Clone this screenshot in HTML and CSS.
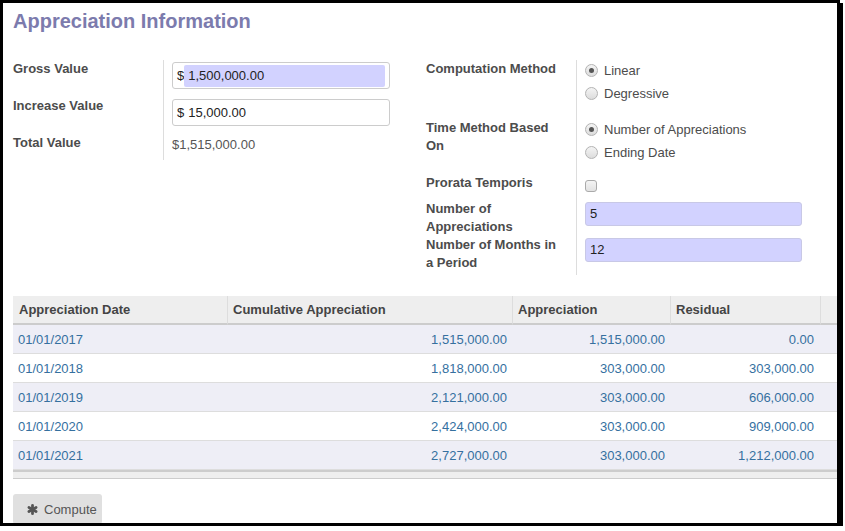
FILE: index.html
```html
<!DOCTYPE html>
<html>
<head>
<meta charset="utf-8">
<link rel="stylesheet" href="styles.css">
</head>
<body>
<div class="frame">
  <h1 class="title">Appreciation Information</h1>
  <div class="groups">
    <div class="grp grp-left">
      <div class="lbl">Gross Value</div>
      <div class="fld"><div class="money"><span class="cur">$</span><span class="amt req">1,500,000.00</span></div></div>
      <div class="lbl">Increase Value</div>
      <div class="fld"><div class="money"><span class="cur">$</span><span class="amt">15,000.00</span></div></div>
      <div class="lbl">Total Value</div>
      <div class="fld"><div class="total">$1,515,000.00</div></div>
    </div>
    <div class="grp grp-right">
      <div class="lbl">Computation Method</div>
      <div class="fld">
        <div class="radio-opt"><span class="radio checked"></span><span>Linear</span></div>
        <div class="radio-opt"><span class="radio"></span><span>Degressive</span></div>
      </div>
      <div class="lbl">Time Method Based On</div>
      <div class="fld">
        <div class="radio-opt"><span class="radio checked"></span><span>Number of Appreciations</span></div>
        <div class="radio-opt"><span class="radio"></span><span>Ending Date</span></div>
      </div>
      <div class="lbl">Prorata Temporis</div>
      <div class="fld"><div class="check"></div></div>
      <div class="lbl">Number of Appreciations</div>
      <div class="fld"><div class="num-input">5</div></div>
      <div class="lbl">Number of Months in a Period</div>
      <div class="fld"><div class="num-input">12</div></div>
    </div>
  </div>
  <table class="lines">
    <colgroup>
      <col class="c-date"><col class="c-cum"><col class="c-app"><col class="c-res"><col class="c-end">
    </colgroup>
    <thead>
      <tr><th>Appreciation Date</th><th>Cumulative Appreciation</th><th>Appreciation</th><th>Residual</th><th></th></tr>
    </thead>
    <tbody>
      <tr><td>01/01/2017</td><td class="num">1,515,000.00</td><td class="num">1,515,000.00</td><td class="num">0.00</td><td></td></tr>
      <tr><td>01/01/2018</td><td class="num">1,818,000.00</td><td class="num">303,000.00</td><td class="num">303,000.00</td><td></td></tr>
      <tr><td>01/01/2019</td><td class="num">2,121,000.00</td><td class="num">303,000.00</td><td class="num">606,000.00</td><td></td></tr>
      <tr><td>01/01/2020</td><td class="num">2,424,000.00</td><td class="num">303,000.00</td><td class="num">909,000.00</td><td></td></tr>
      <tr><td>01/01/2021</td><td class="num">2,727,000.00</td><td class="num">303,000.00</td><td class="num">1,212,000.00</td><td></td></tr>
    </tbody>
    <tfoot>
      <tr><td colspan="5"></td></tr>
    </tfoot>
  </table>
  <div class="actions">
    <button class="btn"><svg class="ico" viewBox="0 0 12 12" width="11" height="11"><g stroke="#555" stroke-width="3" stroke-linecap="round"><line x1="6" y1="1.5" x2="6" y2="10.5"/><line x1="2.1" y1="3.75" x2="9.9" y2="8.25"/><line x1="2.1" y1="8.25" x2="9.9" y2="3.75"/></g></svg><span>Compute</span></button>
  </div>
</div>
</body>
</html>
```

FILE: styles.css
```css
body {
  margin: 0;
  background: #fff;
  font-family: "Liberation Sans", Arial, sans-serif;
  font-size: 13px;
  color: #4c4c4c;
}
.frame {
  width: 840px;
  height: 526px;
  box-sizing: border-box;
  border: 3px solid #000;
  box-shadow: 3px 3px 0 #000;
  overflow: hidden;
  background: #fff;
}
.title {
  margin: 0;
  padding: 6px 0 0 10px;
  font-size: 20px;
  line-height: 24px;
  font-weight: bold;
  color: #7c7bad;
}
.groups {
  display: flex;
  align-items: flex-start;
  margin-top: 27px;
  padding-left: 10px;
  height: 215px;
}
.grp {
  display: grid;
}
.grp-left {
  grid-template-columns: 150px 263px;
  grid-template-rows: 37px 37px 26px;
}
.grp-right {
  grid-template-columns: 150px 250px;
  grid-template-rows: 59px 55px 26px 36px 39px;
}
.lbl {
  font-weight: bold;
  line-height: 18px;
  padding-right: 12px;
  color: #4c4c4c;
}
.fld {
  border-left: 1px solid #ddd;
  padding-left: 8px;
  line-height: 18px;
}
.money {
  display: flex;
  align-items: flex-start;
  width: 218px;
  height: 27px;
  box-sizing: border-box;
  margin-top: 2px;
  padding: 2px 4px 0 4px;
  border: 1px solid #ccc;
  border-radius: 3px;
  color: #222;
}
.cur {
  line-height: 22px;
}
.amt {
  flex: 1;
  height: 22px;
  line-height: 22px;
  padding-left: 4px;
  border-radius: 2px;
}
.amt.req {
  background: #d2d2ff;
}
.total {
  padding-top: 2px;
  color: #555;
}
.radio-opt {
  display: flex;
  align-items: center;
  gap: 6px;
  height: 23px;
  color: #4c4c4c;
}
.radio-opt:first-child {
  margin-top: -1px;
}
.radio {
  width: 11px;
  height: 11px;
  border-radius: 50%;
  border: 1px solid #b3b3b3;
  background: linear-gradient(#f4f4f4, #dcdcdc);
  position: relative;
}
.radio.checked::after {
  content: "";
  position: absolute;
  left: 3px;
  top: 3px;
  width: 5px;
  height: 5px;
  border-radius: 50%;
  background: #555;
}
.check {
  width: 10px;
  height: 10px;
  margin-top: 6px;
  border: 1px solid #aaa;
  border-radius: 3px;
  background: linear-gradient(#f4f4f4, #e2e2e2);
}
.num-input {
  width: 217px;
  height: 24px;
  box-sizing: border-box;
  margin-top: 2px;
  padding: 0 4px;
  line-height: 22px;
  border: 1px solid #c8c8e6;
  border-radius: 3px;
  background: #d2d2ff;
  color: #222;
}
.lines {
  margin: 21px 0 0 10px;
  width: 824px;
  table-layout: fixed;
  border-collapse: separate;
  border-spacing: 0;
}
.c-date { width: 214px; }
.c-cum { width: 285px; }
.c-app { width: 158px; }
.c-res { width: 150px; }
.c-end { width: 17px; }
.lines th {
  height: 26px;
  padding: 0 5px 1px;
  background: #eee;
  border-bottom: 2px solid #ccc;
  text-align: left;
  font-weight: bold;
  color: #444;
  white-space: nowrap;
}
.lines th:first-child {
  padding-left: 6px;
}
.lines th + th {
  border-left: 1px solid #ddd;
}
.lines td {
  height: 28px;
  padding: 0 5px;
  border-bottom: 1px solid #ddd;
  color: #35709f;
  white-space: nowrap;
}
.lines td:first-child {
  padding-left: 5px;
}
.lines td:nth-child(4) {
  padding-right: 6px;
}
.lines td.num {
  text-align: right;
}
.lines tbody tr:nth-child(odd) td {
  background: #eeeef6;
}
.lines tfoot td {
  height: 6px;
  padding: 0;
  background: #eee;
  border-top: 2px solid #ccc;
  border-bottom: 1px solid #ccc;
}
.actions {
  padding: 15px 0 0 10px;
}
.btn {
  display: flex;
  align-items: center;
  gap: 6px;
  width: 89px;
  height: 30px;
  padding: 0 0 0 14px;
  border: none;
  border-radius: 3px;
  background: #e0e0e0;
  color: #555;
  font-family: "Liberation Sans", Arial, sans-serif;
  font-size: 13px;
}
.ico {
  display: block;
}
```
